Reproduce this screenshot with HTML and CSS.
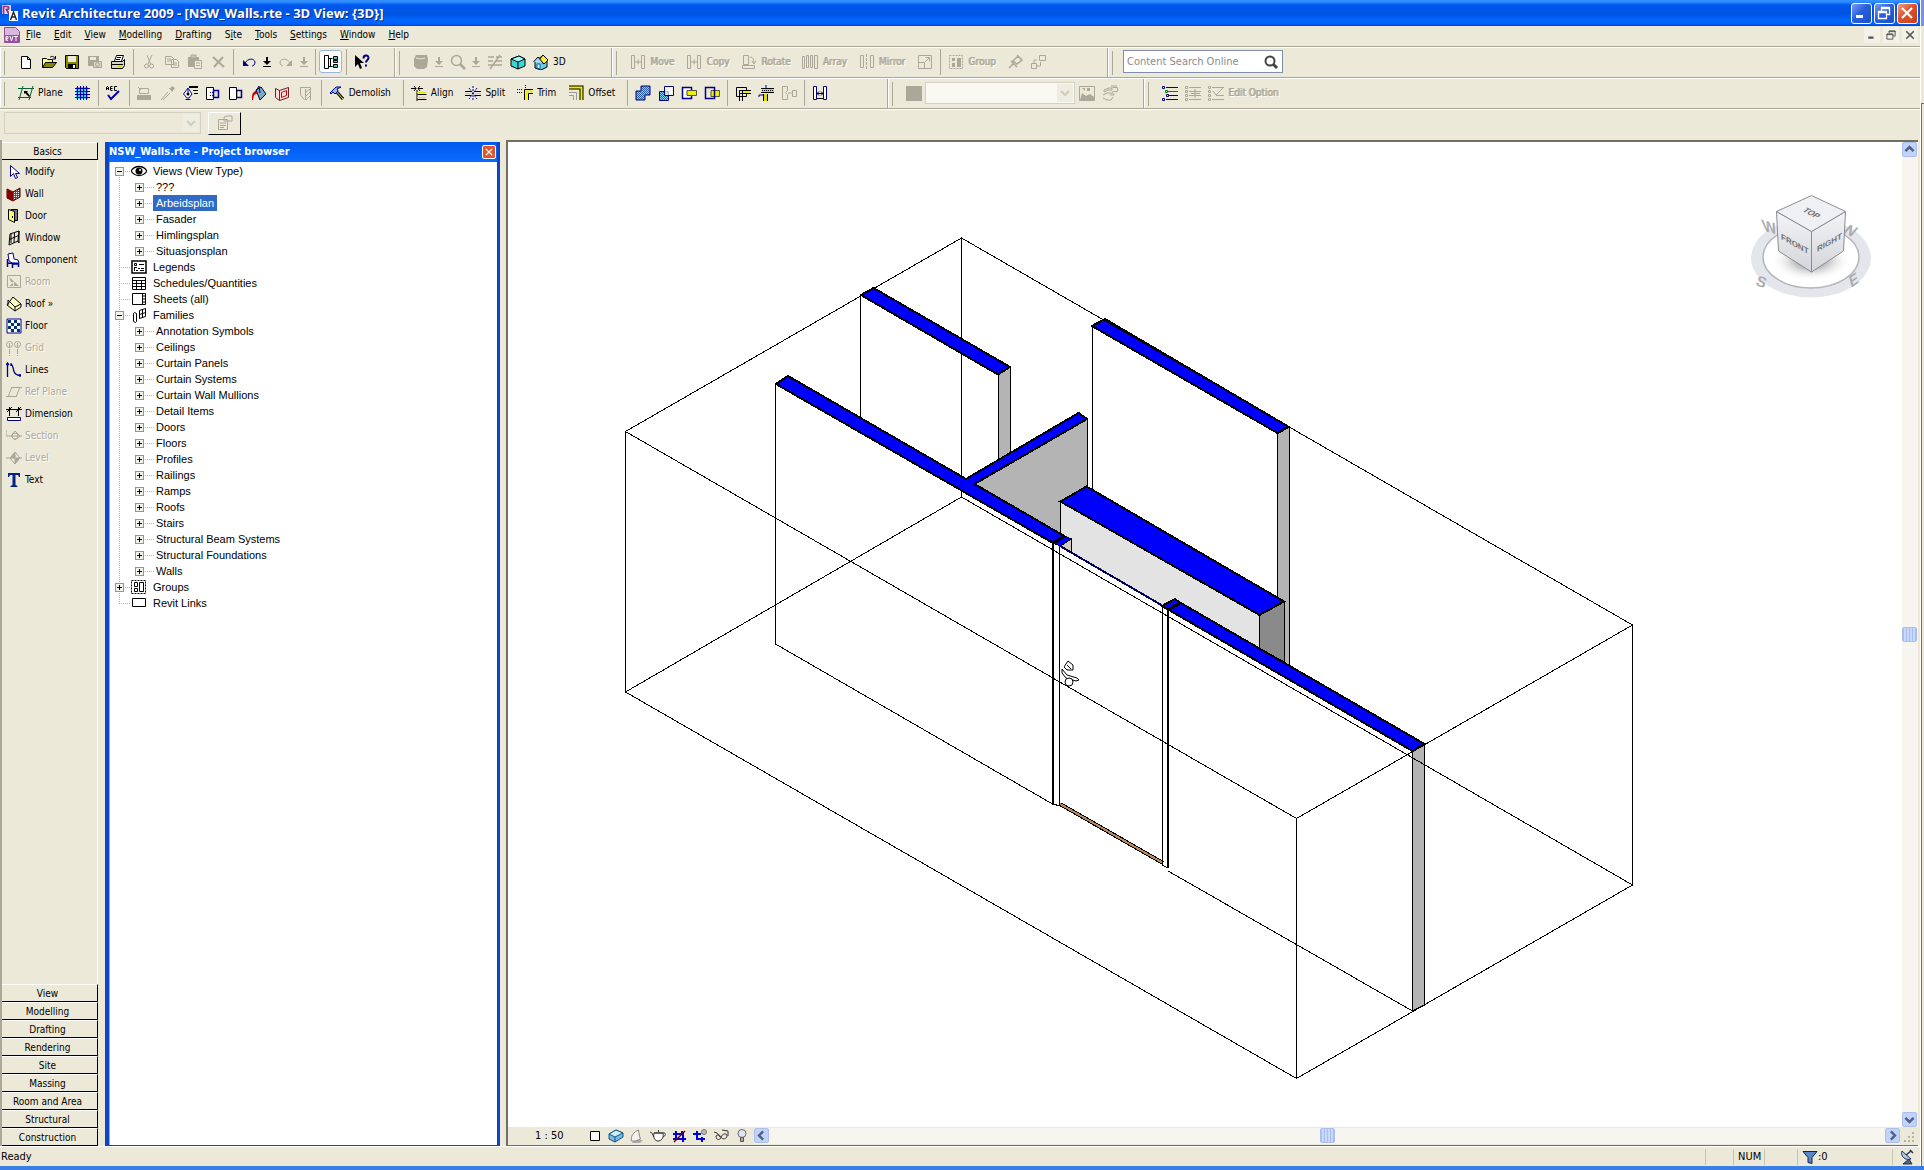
FILE: index.html
```html
<!DOCTYPE html>
<html lang="en">
<head>
  <meta charset="UTF-8">
  <meta name="viewport" content="width=device-width, initial-scale=1.0">
  <title>Revit Architecture 2009 - [NSW_Walls.rte - 3D View: {3D}]</title>
  <link rel="stylesheet" href="styles.css">
</head>
<body>
  <!-- icon sprite -->
  <svg class="sprite" aria-hidden="true">
    <defs>
      <pattern id="dots" width="2" height="2" patternUnits="userSpaceOnUse"><rect width="2" height="2" fill="#7fd4e8"/><path d="M0 0h1v1h-1zM1 1h1v1h-1z" fill="#2a5fa0"/></pattern>
      <pattern id="brick" width="2" height="2" patternUnits="userSpaceOnUse"><rect width="2" height="2" fill="#c22"/><path d="M0 0h1v1h-1z" fill="#fff"/></pattern>
      <linearGradient id="cubeFace" x1="0" y1="0" x2="0" y2="1"><stop offset="0" stop-color="#f3f4f7"/><stop offset="1" stop-color="#d3d5da"/></linearGradient>
      <radialGradient id="cubeShade"><stop offset="0.3" stop-color="#888" stop-opacity=".7"/><stop offset="1" stop-color="#fff" stop-opacity="0"/></radialGradient>
    </defs>
    <symbol id="new" viewBox="0 0 16 16"><path d="M3.500 2.500h6l3 3v9h-9zM9.500 2.500v3h3" fill="#fff" stroke="#000"/></symbol>
    <symbol id="open" viewBox="0 0 16 16"><path d="M1.500 13.500v-9h4l1 1h5v3" fill="#ff8" stroke="#000"/><path d="M1.500 13.500l3-5h11l-4 5z" fill="#880" stroke="#000"/><path d="M9 3.500c2-2 4-1 5 1M14.500 2v3h-3" fill="none" stroke="#000"/></symbol>
    <symbol id="save" viewBox="0 0 16 16"><path d="M1.500 1.500h13v13h-12l-1-1z" fill="#880" stroke="#000"/><path d="M4 2h8v6H4z" fill="#ece9d8"/><path d="M4 10h8v4H4z" fill="#000"/><path d="M9 11h2v3H9z" fill="#fff"/></symbol>
    <symbol id="saveall" viewBox="0 0 16 16"><path d="M1 2h11v10H1z" fill="#aca899"/><path d="M3 3h6v3H3z" fill="#ece9d8"/><path d="M6.500 7.500h8v6h-8z" fill="#d8d4c4" stroke="#aca899"/><circle cx="10.500" cy="10.500" r="2" fill="none" stroke="#aca899"/></symbol>
    <symbol id="print" viewBox="0 0 16 16"><path d="M4.500 7l2-5.500h7l-2 5.500" fill="#fff" stroke="#000"/><path d="M1.500 7.500h11l2-2v6l-2 3h-11z" fill="#d8d4c4" stroke="#000"/><path d="M2 10.500h11M7 3.500h4M6 5.500h4" stroke="#000"/><path d="M8 12h3v1H8z" fill="#cc0"/></symbol>
    <symbol id="cut" viewBox="0 0 16 16"><path d="M6 1l3.500 9M11 1L7 10" stroke="#aca899" fill="none"/><circle cx="5.500" cy="12" r="2" fill="none" stroke="#aca899"/><circle cx="10.500" cy="12" r="2" fill="none" stroke="#aca899"/></symbol>
    <symbol id="copy" viewBox="0 0 16 16"><g fill="#ece9d8" stroke="#aca899"><path d="M1.500 2.500h6l2 2v6h-8zM7.500 5.500h5l2 2v6h-7zM3 5h4M3 7h4M9 9h4M9 11h4"/></g></symbol>
    <symbol id="paste" viewBox="0 0 16 16"><path d="M1 3h11v10H1z" fill="#aca899"/><path d="M4 1h5v3H4z" fill="#c8c4b4" stroke="#aca899"/><path d="M7.500 6.500h7v8h-7zM9 9h4M9 11.500h4" fill="#ece9d8" stroke="#aca899"/></symbol>
    <symbol id="del" viewBox="0 0 16 16"><path d="M3 3l11 10M13 3L4 13" stroke="#aca899" stroke-width="2"/></symbol>
    <symbol id="undo" viewBox="0 0 16 16"><path d="M4 9c3-5 9-5 10-1 0 3-2 4-3 4" fill="none" stroke="#008"/><path d="M2 6v6h6z" fill="#008"/></symbol>
    <symbol id="redo" viewBox="0 0 16 16"><path d="M12 9c-3-5-9-5-10-1 0 3 2 4 3 4" fill="none" stroke="#aca899"/><path d="M14 6v6H8z" fill="#aca899"/></symbol>
    <symbol id="drop" viewBox="0 0 16 16"><path d="M7 3h2v4h3l-4 4-4-4h3zM4 12h8v1H4z" fill="currentColor"/></symbol>
    <symbol id="tree" viewBox="0 0 16 16"><path d="M1.500 1.500h4v13h-4zM5.500 4.500h4M5.500 12.500h4M7.500 4v9" fill="none" stroke="#000"/><path d="M10.500 2.500h4v3h-4zM10.500 10.500h4v3h-4zM10.500 6.500h4v2h-4z" fill="#4cc" stroke="#000"/></symbol>
    <symbol id="help" viewBox="0 0 16 16"><path d="M1 1v12l3-3 2 5 2-1-2-5h4z" fill="#000"/><path d="M9.500 4.500c0-4 5-4 5-.500 0 2-2.500 2-2.500 4.500M12 10.500v2" fill="none" stroke="#008" stroke-width="2"/></symbol>
    <symbol id="wheel" viewBox="0 0 16 16"><path d="M3 1h11l1 4-1 8-3 2H4l-3-3V5z" fill="#aca899"/><path d="M3 4c3 1 6 1 9 0" stroke="#ece9d8" fill="none"/></symbol>
    <symbol id="zoom" viewBox="0 0 16 16"><circle cx="6.500" cy="6.500" r="5" fill="none" stroke="#aca899" stroke-width="1.500"/><path d="M10 10l5 5" stroke="#aca899" stroke-width="2.500"/></symbol>
    <symbol id="thin" viewBox="0 0 16 16"><path d="M1 3h6M1 7h5M1 11h4M9 3h6M8 7h7M6 11h9M3 15L13 1" stroke="#aca899" stroke-width="1.500"/></symbol>
    <symbol id="cube" viewBox="0 0 16 16"><path d="M1 5l8-3 6 3v7l-7 3-7-3z" fill="#3cd6d6" stroke="#000"/><path d="M1 5l7 3 7-3L9 2z" fill="#9ff" stroke="#000"/><path d="M8 8v7" stroke="#000"/></symbol>
    <symbol id="house" viewBox="0 0 16 16"><path d="M2 8v6l6 2 6-3V7L9 2z" fill="#6cd" stroke="#000"/><path d="M6 6l4-5 5 5-4 4z" fill="#fe3" stroke="#000"/><path d="M0.500 8L5 3l5 6" fill="#adf" stroke="#000"/><path d="M4 10h3v5l-3-1z" fill="#fff" stroke="#06a"/></symbol>
    <symbol id="move" viewBox="0 0 16 16"><path d="M1.500 1.500h3v13h-3zM11.500 1.500h3v13h-3zM5 8h6M8 5.500v5" fill="none" stroke="#aca899"/></symbol>
    <symbol id="rotate" viewBox="0 0 16 16"><path d="M2.500 1.500h5v9h-5zM1.500 11.500h12v3h-12zM9 3c3 0 4 3 4 6M11 7l2 3 2-3" fill="none" stroke="#aca899"/></symbol>
    <symbol id="array" viewBox="0 0 16 16"><path d="M.500 2.500h2v12h-2zM4.500 1.500h2v12h-2zM8.500 1.500h2v12h-2zM12.500 1.500h3v13h-3z" fill="none" stroke="#aca899"/></symbol>
    <symbol id="mirror" viewBox="0 0 16 16"><path d="M1.500 1.500h3v12h-3zM11.500 1.500h3v12h-3z" fill="none" stroke="#aca899"/><path d="M7.500 0v16" stroke="#aca899" stroke-dasharray="3 1"/></symbol>
    <symbol id="resize" viewBox="0 0 16 16"><path d="M1.500 1.500h13v13h-13zM1.500 8.500h6v6M8 8l4-4M8.500 3.500h4v4" fill="none" stroke="#aca899"/></symbol>
    <symbol id="group" viewBox="0 0 16 16"><path d="M1.500 1.500h13v13h-13z" fill="none" stroke="#aca899" stroke-dasharray="2 1"/><path d="M4 4h3v3H4zM4 9h3v4H4zM9 4h4v9H9z" fill="#aca899"/></symbol>
    <symbol id="pin" viewBox="0 0 16 16"><path d="M2 14l5-5M4 7l6 6M6 7l5-5 4 4-5 4zM10 1l5 5" stroke="#aca899" stroke-width="1.500" fill="none"/></symbol>
    <symbol id="link" viewBox="0 0 16 16"><path d="M1.500 9.500h5v5h-5zM9.500 1.500h6v5h-6zM4 9V6h3M6.500 12h4V8" fill="none" stroke="#aca899"/></symbol>
    <symbol id="plane" viewBox="0 0 16 16"><path d="M0 3.500h16M0 12.500h13M5 1L1 15M15 1l-4 14" stroke="#063" fill="none"/><path d="M6 6h4l-1 1 3 4-1 1-4-4-1 1z" fill="#000"/></symbol>
    <symbol id="grid" viewBox="0 0 16 16"><path d="M2 2h12v12H2z" fill="#4cf"/><path d="M1 3.500h15M1 6.500h15M1 9.500h15M1 12.500h15M3.500 1v14M6.500 1v14M9.500 1v14M12.500 1v14" stroke="#00a"/></symbol>
    <symbol id="spell" viewBox="0 0 16 16"><path d="M1.500 5V2M3.500 5V2M2 1.500h1M2 3.500h1M5.500 1.500v4M6 1.500h1.500M6 3.500h1.500M6 5.500h1.500M12 1.500h-2.500v4H12" stroke="#000" fill="none"/><path d="M3 10l3 4 8-8" fill="none" stroke="#00a" stroke-width="2"/></symbol>
    <symbol id="stamp" viewBox="0 0 16 16"><path d="M1 10h14v5H1z" fill="#aca899"/><path d="M3.500 3.500h9v5h-9zM2 2l3 3" fill="none" stroke="#aca899"/></symbol>
    <symbol id="dropper" viewBox="0 0 16 16"><path d="M2 15l7-8M4 15l7-7M10 3l4 3" stroke="#aca899" fill="none"/><path d="M11 4l2-3 3 2-3 4z" fill="#aca899"/></symbol>
    <symbol id="pen" viewBox="0 0 16 16"><path d="M1.500 9L6 3l4 6-3 4H5zM6 4v5M3.500 14.500h5" fill="#fff" stroke="#008"/><path d="M7 1h9v2H7zM11 5h5v1h-5zM12 8h4v1h-4z" fill="#000"/><circle cx="6" cy="9" r="1.500"/></symbol>
    <symbol id="cuta" viewBox="0 0 16 16"><path d="M1.500 2.500h7v12h-7z" fill="#fff" stroke="#000"/><path d="M8.500 5.500h5v7h-5z" fill="#ddd" stroke="#008" stroke-width="1.500"/><path d="M5 7.500h3M5 10.500h3" stroke="#008" stroke-dasharray="1 1"/></symbol>
    <symbol id="cutb" viewBox="0 0 16 16"><path d="M8.500 5.500h5v7h-5z" fill="none" stroke="#008" stroke-width="1.500"/><path d="M1.500 2.500h7v12h-7z" fill="#fff" stroke="#000"/></symbol>
    <symbol id="paint" viewBox="0 0 16 16"><path d="M5 5l5-3 5 7-6 6z" fill="#7ac" stroke="#000"/><path d="M4 8L8 1l1 7" fill="none" stroke="#008"/><path d="M1 15c0-5 0-8 4-9l2 2-4 2-1 5z" fill="#c00"/></symbol>
    <symbol id="face" viewBox="0 0 16 16"><path d="M1.500 3.500l4 2 9-3v10l-9 3-4-3z" fill="#fdd" stroke="#622"/><path d="M5.500 5v10M7.500 7.500l5-2v5l-5 2z" fill="none" stroke="#c00"/></symbol>
    <symbol id="hatch" viewBox="0 0 16 16"><path d="M3.500 2.500h10v13M3.500 2v8l4 5M8.500 4v11M9 7l4-3M9 11l4-4M9 15l4-4" fill="none" stroke="#aca899"/></symbol>
    <symbol id="hammer" viewBox="0 0 16 16"><path d="M7 6l7 8" stroke="#000" stroke-width="3"/><path d="M7 6l7 8" stroke="#ee6"/><path d="M1 8l6-6h5L8 4l1 2-3 3-2-2-2 2z" fill="#9bd" stroke="#008"/></symbol>
    <symbol id="align" viewBox="0 0 16 16"><path d="M6 5v11M6.500 9.500h9M6.500 14.500h9" fill="none" stroke="#000"/><path d="M6 7h9v1H6zM6 12h9v1H6z" fill="#dd0"/><path d="M0 3.500h5M3 1l2 2.500L3 6M12 3.500H7M9 1L7 3.500 9 6" stroke="#000" fill="none"/></symbol>
    <symbol id="split" viewBox="0 0 16 16"><path d="M0 6.500h6M10 6.500h6M0 10.500h6M10 10.500h6" stroke="#000"/><path d="M0 8h6v1H0zM10 8h6v1h-6z" fill="#dd0"/><path d="M8 1v15M4 3l8 11M12 3L4 14" stroke="#008" stroke-dasharray="2 1"/></symbol>
    <symbol id="trim" viewBox="0 0 16 16"><path d="M0 4.500h6M0 7.500h6M8.500 0v4" stroke="#008" stroke-dasharray="1 1"/><path d="M7.500 15V4.500H16M11.500 15V8.500H16" fill="none" stroke="#000"/><path d="M9.500 15V6.500H16" fill="none" stroke="#ee0" stroke-width="2"/></symbol>
    <symbol id="offset" viewBox="0 0 16 16"><path d="M1 2.500h12.500V15" fill="none" stroke="#000" stroke-width="4"/><path d="M1 2.500h12.500V15" fill="none" stroke="#ee0" stroke-width="2"/><path d="M1 7.500h7.500V15M1 10.500h4.500V15" fill="none" stroke="#999"/></symbol>
    <symbol id="join" viewBox="0 0 16 16"><path d="M6 1h9v9h-5v5H1V6h5z" fill="url(#dots)" stroke="#008"/></symbol>
    <symbol id="unjoin" viewBox="0 0 16 16"><path d="M1.500 6.500h9v9h-9z" fill="url(#dots)" stroke="#008"/><path d="M6.500 1.500h9v9h-9z" fill="#fff" fill-opacity=".7" stroke="#008"/></symbol>
    <symbol id="cutgeo" viewBox="0 0 16 16"><path d="M1.500 2.500h9v11h-9z" fill="#fff" stroke="#008" stroke-width="1.500"/><path d="M6 5.500h9.500v5H6z" fill="#ee0" stroke="#553"/></symbol>
    <symbol id="uncut" viewBox="0 0 16 16"><path d="M7 5.500h8.500v6H7z" fill="#ee0" stroke="#553"/><path d="M1.500 2.500h9v11h-9z" fill="none" stroke="#008" stroke-width="1.500"/></symbol>
    <symbol id="wjoin" viewBox="0 0 16 16"><path d="M1.500 2.500h10v9h-10zM4.500 16V5.500H16M4 8.500h12M7.500 16V6" fill="none" stroke="#000"/><path d="M8 6h7v2H8z" fill="#ee0"/></symbol>
    <symbol id="beam" viewBox="0 0 16 16"><path d="M3 3.500h13M3 7.500h13M5.500 9v7M9.500 9v7" stroke="#000"/><path d="M4 4h12v3H4zM6 9h3v7H6z" fill="#dd0"/><path d="M8 0v3M1 12v-2h4" fill="none" stroke="#008"/><path d="M4 5.500h12" stroke="#000" stroke-dasharray="1 1"/></symbol>
    <symbol id="wallopen" viewBox="0 0 16 16"><path d="M1.500 1.500h5v4l-2 2 2 2v5h-5zM7 8h4M11.500 5.500h4v6h-4z" fill="none" stroke="#aca899"/></symbol>
    <symbol id="measure" viewBox="0 0 16 16"><path d="M1.500 1.500h3v13h-3zM11.500 1.500h3v13h-3z" fill="#fff" stroke="#008"/><path d="M5 8.500h6M7 6.500l-2 2 2 2M9 6.500l2 2-2 2M5 13.500h6" fill="none" stroke="#000"/></symbol>
    <symbol id="solid" viewBox="0 0 16 16"><path d="M0 1h16v15H0z" fill="#aca899"/></symbol>
    <symbol id="pic" viewBox="0 0 16 16"><path d="M.500 1.500h15v14H.500z" fill="#ece9d8" stroke="#aca899"/><path d="M1 15l2-7 4 3 4-2 4 3v3zM3 3h3v3zM8 3h3v3H8z" fill="#aca899"/></symbol>
    <symbol id="hands" viewBox="0 0 16 16"><path d="M2 5l5-2h3v2h-4l-4 2zM10.500 2.500h5v4h-5M1 10l4-2h6l1 2H8M1 13l4 2h4l2-3M9 1h6" fill="none" stroke="#aca899"/></symbol>
    <symbol id="opts" viewBox="0 0 16 16"><path d="M4 2.500h12M10 10.500h6M4 14.500h12M7 10.500h4" stroke="#008"/><path d="M6 6.500h10" stroke="#080"/><path d="M.500 1.500h2v2h-2zM.500 13.500h2v2h-2zM4.500 9.500h2v2h-2z" fill="none" stroke="#008"/><path d="M3.500 5.500h2v2h-2z" fill="none" stroke="#080"/></symbol>
    <symbol id="optadd" viewBox="0 0 16 16"><path d="M4 2.500h12M4 6.500h12M4 10.500h12M4 14.500h12M6 8.500h9M10 4v9" stroke="#aca899"/><path d="M.500 1.500h2v2h-2zM.500 5.500h2v2h-2zM.500 9.500h2v2h-2zM.500 13.500h2v2h-2z" fill="none" stroke="#aca899"/></symbol>
    <symbol id="optedit" viewBox="0 0 16 16"><path d="M4 2.500h12M8 10.500h8M4 14.500h12M5 6l3 4 7-7" fill="none" stroke="#aca899"/><path d="M.500 1.500h2v2h-2zM.500 5.500h2v2h-2zM.500 9.500h2v2h-2zM.500 13.500h2v2h-2z" fill="none" stroke="#aca899"/></symbol>
    <symbol id="props" viewBox="0 0 16 16"><path d="M1.500 4.500h9v10h-9zM3 8h6M3 10.500h6M3 12.500h4M7 6V2l3-1h5v5h-4z" fill="#ece9d8" stroke="#aca899"/></symbol>
    <symbol id="find" viewBox="0 0 16 16"><circle cx="7" cy="7" r="4.500" fill="none" stroke="#444" stroke-width="2"/><path d="M10 10l4 4" stroke="#444" stroke-width="3"/></symbol>
    <!-- design bar -->
    <symbol id="modify" viewBox="0 0 16 16"><path d="M4.500 1.500v11l3-3 2 5 2-1-2-4h4z" fill="#fff" stroke="#008"/></symbol>
    <symbol id="wall" viewBox="0 0 16 16"><path d="M1 3l6 3 7-4v9l-7 4-6-3z" fill="url(#brick)" stroke="#500"/><path d="M1 3l6 3v9l-6-3z" fill="#800"/></symbol>
    <symbol id="door" viewBox="0 0 16 16"><path d="M5 1.500h6.500v11H9z" fill="#777" stroke="#000"/><path d="M2.500 1.500l6 2v11l-6-3z" fill="#ff7" stroke="#000"/><path d="M6 8h1v2H6z"/></symbol>
    <symbol id="window" viewBox="0 0 16 16"><path d="M4 4l9-3-1 10-9 4zM8.500 2.500L8 13M3.500 9.500l9-4M12 11l1 2V1M5 3v10" fill="none" stroke="#000"/></symbol>
    <symbol id="component" viewBox="0 0 16 16"><path d="M2 2l5-1 1 6 4 1 1 3H6L3 9z" fill="#fff" stroke="#008"/><path d="M1.500 7v8M6.500 12v4M12.500 11v4M2 11l10 1" stroke="#008" stroke-width="1.500"/></symbol>
    <symbol id="room" viewBox="0 0 16 16"><path d="M1.500 1.500h13v12h-13z" fill="#ece9d8" stroke="#aca899"/><path d="M3 3l10 9H8V8H5zM3 12l4-3v3z" fill="#aca899"/></symbol>
    <symbol id="roof" viewBox="0 0 16 16"><path d="M1 9l6-8 8 7v3l-6 4z" fill="#ffb" stroke="#000"/><path d="M2 4l7 7 6-3M9 11v4M2 4v5" fill="none" stroke="#000"/></symbol>
    <symbol id="floor" viewBox="0 0 16 16"><path d="M1 1h14v14H1z" fill="#fff" stroke="#008"/><path d="M2 2h3v3h3V2h3v3h3v3h-3v3h3v3h-3v-3H8v3H5v-3H2V8h3V5H2zM5 8h3v3H5zM8 5h3v3H8z" fill="#037" fill-rule="evenodd"/></symbol>
    <symbol id="cols" viewBox="0 0 16 16"><circle cx="3.500" cy="4.500" r="3" fill="none" stroke="#aca899"/><circle cx="11.500" cy="4.500" r="3" fill="none" stroke="#aca899"/><path d="M3.500 3v13M11.500 3v13" stroke="#aca899" stroke-dasharray="5 1"/></symbol>
    <symbol id="lines" viewBox="0 0 16 16"><path d="M1.500 1v14M0 3l1.500-2L3 3M5 2.500c2 0 2 4 3 7s3 4 7 4M5 1v3M14 12v3" fill="none" stroke="#008" stroke-width="1.300"/></symbol>
    <symbol id="refplane" viewBox="0 0 16 16"><path d="M5 3.500h11M0 12.500h11M6 3L2 13M14 3l-4 10" stroke="#aca899"/></symbol>
    <symbol id="dim" viewBox="0 0 16 16"><path d="M0 3.500h16M3.500 1v9M12.500 1v9M1 6l5-5M10 6l5-5" stroke="#000"/><path d="M1.500 11.500h13v3h-13z" fill="#fff" stroke="#008"/></symbol>
    <symbol id="section" viewBox="0 0 16 16"><path d="M0 2v6h16M5 8l4-5 5 5-5 4z" fill="none" stroke="#aca899"/><circle cx="9" cy="8" r="3" fill="none" stroke="#aca899"/></symbol>
    <symbol id="level" viewBox="0 0 16 16"><path d="M0 8h16M4 8l5-6v12M9 2l5 6-5 6-5-6" fill="none" stroke="#aca899"/><path d="M4 8h5V2zM9 8h5l-5 6z" fill="#aca899"/></symbol>
    <symbol id="text" viewBox="0 0 16 16"><path d="M2 1h12v4h-1l-1-2H9.500v10l2 1v1h-7v-1l2-1V3H4L3 5H2z" fill="#00228a"/></symbol>
    <!-- browser -->
    <symbol id="eye" viewBox="0 0 16 16"><path d="M0 8c4-6 12-6 16 0-4 6-12 6-16 0z" fill="#fff" stroke="#000" stroke-width="1.300"/><circle cx="8" cy="8" r="3.500"/><circle cx="9" cy="7" r="1" fill="#fff"/></symbol>
    <symbol id="legend" viewBox="0 0 16 16"><path d="M1 2h14v12H1z" fill="#fff" stroke="#000" stroke-width="1.500"/><path d="M3.500 4.500h2v2h-2zM8 5.500h5M3.500 8v4M4 8.500h2M7 9.500h2M10 9.500h3M5 11.500h2M9 11.500h4" fill="none" stroke="#000"/></symbol>
    <symbol id="sched" viewBox="0 0 16 16"><path d="M1.500 2.500h13v12h-13zM1 5.500h14M1 8.500h14M1 11.500h14M5.500 5v9M10.500 5v9" fill="#fff" stroke="#000"/></symbol>
    <symbol id="sheet" viewBox="0 0 16 16"><path d="M1.500 2.500h13v11h-13zM11.500 2v12M12 5h2M12 8h2M12 11h2" fill="#fff" stroke="#000"/></symbol>
    <symbol id="family" viewBox="0 0 16 16"><path d="M2.500 6.500l1-1 2 1v8l-1 1-2-1zM8.500 3.500l6-2v8l-6 2zM11.500 2.500v8M8.500 7.500l6-2" fill="none" stroke="#000"/></symbol>
    <symbol id="groups" viewBox="0 0 16 16"><path d="M.500 1.500h14v13H.500z" fill="none" stroke="#000" stroke-dasharray="2 1"/><path d="M3.500 3.500h3v4h-3zM3.500 9.500h3v3h-3zM8.500 3.500h4v9h-4z" fill="none" stroke="#000"/></symbol>
    <symbol id="rlink" viewBox="0 0 16 16"><path d="M1.500 3.500h13v8h-13z" fill="#fff" stroke="#000"/></symbol>
    <!-- view bar -->
    <symbol id="detail" viewBox="0 0 16 16"><path d="M3.500 3.500h9v9h-9z" fill="#fff" stroke="#000"/></symbol>
    <symbol id="shade" viewBox="0 0 16 16"><path d="M1 6l7-4 7 3v4l-8 5-6-3z" fill="#7be" stroke="#157"/><path d="M1 6l6 3 8-4-7-3z" fill="#cef" stroke="#157"/><path d="M7 9v5" stroke="#157"/></symbol>
    <symbol id="shadow" viewBox="0 0 16 16"><path d="M5 12h9l-3 3H3z" fill="#aaa"/><path d="M2.500 13c-1-5 2-9 7-11l1 6 1 3-5 2z" fill="#f4f2ea" stroke="#888"/></symbol>
    <symbol id="teapot" viewBox="0 0 16 16"><path d="M4 5c-1 5 1 8 4 8s6-3 5-8zM4 9L1.500 4.500 0 4M13 5c3-1 3 3 0 4M4 5h9M8.500 2v2" fill="#fff" stroke="#333"/></symbol>
    <symbol id="crop" viewBox="0 0 16 16"><path d="M2 6h10v8M5 3v8h10M2 11h4M11 6V3" fill="none" stroke="#00d" stroke-width="2"/><path d="M3 14L14 3" stroke="#600" stroke-width="1.500"/></symbol>
    <symbol id="cropvis" viewBox="0 0 16 16"><path d="M1 6h8M5 3v8h8M10 9v5" fill="none" stroke="#00d" stroke-width="2"/><circle cx="12" cy="4" r="2.500" fill="#bbb" stroke="#777"/></symbol>
    <symbol id="glasses" viewBox="0 0 16 16"><path d="M1 4l3 1 3 4M9 2l6 1v5M3 8c0 5 5 4 5 1M8 9c1 3 6 2 6-1s-4-3-6 1M3 8c2-2 4-1 5 1" fill="none" stroke="#333"/></symbol>
    <symbol id="bulb" viewBox="0 0 16 16"><circle cx="8" cy="5.500" r="4" fill="#dfe6f2" stroke="#667"/><path d="M6.500 9.500h3v4h-3z" fill="#aaa" stroke="#555"/></symbol>
    <symbol id="funnel" viewBox="0 0 16 16"><path d="M1 2.500h14L10 8.500v6l-4-1v-5z" fill="#5a86c8" stroke="#124"/></symbol>
    <symbol id="dish" viewBox="0 0 16 16"><path d="M4 15h9l-3-5z" fill="#567" stroke="#235"/><path d="M3 2c-2 5 3 10 9 8z" fill="#adc6e6" stroke="#235"/><path d="M7 6l5-4M11 1l3 3" stroke="#235" stroke-width="1.500"/></symbol>
    <symbol id="min" viewBox="0 0 16 16"><path d="M3 10h7v3H3z" fill="currentColor"/></symbol>
    <symbol id="restore" viewBox="0 0 16 16"><path d="M5.500 6V2.500h8v7H11M5 3.500h9M2.500 6.500h8v7h-8zM2 7.500h9" fill="none" stroke="currentColor" stroke-width="1.300"/></symbol>
    <symbol id="close" viewBox="0 0 16 16"><path d="M3 3l10 10M13 3L3 13" stroke="currentColor" stroke-width="2.200"/></symbol>
    <symbol id="chev" viewBox="0 0 16 16"><path d="M3 10l5-5 5 5" fill="none" stroke="#4d6185" stroke-width="3"/></symbol>
  </svg>

  <div class="screen">
  <div class="app">
    <header class="titlebar">
      <svg class="logo" viewBox="0 0 16 16"><path d="M0 0h9v9H0z" fill="#e9d9ee"/><path d="M1.500 9V1.500h3c3 0 3 3 0 3L7 9" fill="none" stroke="#93307f" stroke-width="1.700"/><path d="M7 6h9v10H7z" fill="#fff"/><path d="M8.500 15l3-8 3 8M9.500 12h4" fill="none" stroke="#222" stroke-width="1.400"/></svg>
      <h1>Revit Architecture 2009 - [NSW_Walls.rte - 3D View: {3D}]</h1>
      <div class="winbtns">
        <button aria-label="Minimize"><svg><use href="#min"/></svg></button>
        <button aria-label="Restore"><svg><use href="#restore"/></svg></button>
        <button class="red" aria-label="Close"><svg><use href="#close"/></svg></button>
      </div>
    </header>

    <nav class="menubar">
      <svg class="doc" viewBox="0 0 16 16"><path d="M.500.500h11l4 4v11H.500z" fill="#d9b8de" stroke="#8f4f9a"/><path d="M0 8h16v7H0z" fill="#9a4f9f"/><path d="M2 14V9.500h2v2H2l2 2.500M6 9l1.500 5L9 9M10 9.500h4M12 9.500V14" fill="none" stroke="#fff"/></svg>
      <button><u>F</u>ile</button>
      <button><u>E</u>dit</button>
      <button><u>V</u>iew</button>
      <button><u>M</u>odelling</button>
      <button><u>D</u>rafting</button>
      <button>S<u>i</u>te</button>
      <button><u>T</u>ools</button>
      <button><u>S</u>ettings</button>
      <button><u>W</u>indow</button>
      <button><u>H</u>elp</button>
      <div class="docbtns">
        <button aria-label="Minimize view"><svg><use href="#min"/></svg></button>
        <button aria-label="Restore view"><svg><use href="#restore"/></svg></button>
        <button aria-label="Close view"><svg><use href="#close"/></svg></button>
      </div>
    </nav>

    <div class="toolrow">
      <div class="toolbar std">
        <button class="tool" aria-label="New"><svg><use href="#new"/></svg></button>
        <button class="tool" aria-label="Open"><svg><use href="#open"/></svg></button>
        <button class="tool" aria-label="Save"><svg><use href="#save"/></svg></button>
        <button class="tool" aria-label="Save to central" disabled><svg><use href="#saveall"/></svg></button>
        <button class="tool" aria-label="Print"><svg><use href="#print"/></svg></button>
        <span class="sep"></span>
        <button class="tool" aria-label="Cut" disabled><svg><use href="#cut"/></svg></button>
        <button class="tool" aria-label="Copy" disabled><svg><use href="#copy"/></svg></button>
        <button class="tool" aria-label="Paste" disabled><svg><use href="#paste"/></svg></button>
        <button class="tool" aria-label="Delete" disabled><svg><use href="#del"/></svg></button>
        <span class="sep"></span>
        <button class="tool" aria-label="Undo"><svg><use href="#undo"/></svg></button>
        <button class="tool drop" aria-label="Undo list"><svg><use href="#drop"/></svg></button>
        <button class="tool" aria-label="Redo" disabled><svg><use href="#redo"/></svg></button>
        <button class="tool drop" aria-label="Redo list" disabled><svg><use href="#drop"/></svg></button>
        <span class="sep"></span>
        <button class="tool pressed" aria-label="Project browser"><svg><use href="#tree"/></svg></button>
        <span class="sep"></span>
        <button class="tool" aria-label="Help"><svg><use href="#help"/></svg></button>
      </div>
      <div class="toolbar view">
        <button class="tool" aria-label="Steering wheel" disabled><svg><use href="#wheel"/></svg></button>
        <button class="tool drop" aria-label="Wheel list" disabled><svg><use href="#drop"/></svg></button>
        <button class="tool" aria-label="Zoom" disabled><svg><use href="#zoom"/></svg></button>
        <button class="tool drop" aria-label="Zoom list" disabled><svg><use href="#drop"/></svg></button>
        <button class="tool" aria-label="Thin lines" disabled><svg><use href="#thin"/></svg></button>
        <button class="tool" aria-label="Default view"><svg><use href="#cube"/></svg></button>
        <button class="tool label"><svg><use href="#house"/></svg>3D</button>
      </div>
      <div class="toolbar edit">
        <button class="tool label" disabled><svg><use href="#move"/></svg>Move</button>
        <button class="tool label" disabled><svg><use href="#move"/></svg>Copy</button>
        <button class="tool label" disabled><svg><use href="#rotate"/></svg>Rotate</button>
        <button class="tool label" disabled><svg><use href="#array"/></svg>Array</button>
        <button class="tool label" disabled><svg><use href="#mirror"/></svg>Mirror</button>
        <button class="tool" aria-label="Resize" disabled><svg><use href="#resize"/></svg></button>
        <span class="sep"></span>
        <button class="tool label" disabled><svg><use href="#group"/></svg>Group</button>
        <button class="tool" aria-label="Pin" disabled><svg><use href="#pin"/></svg></button>
        <button class="tool" aria-label="Create similar" disabled><svg><use href="#link"/></svg></button>
      </div>
      <div class="toolbar last">
        <div class="search">
          <input type="text" placeholder="Content Search Online" aria-label="Content Search Online">
          <button aria-label="Search"><svg><use href="#find"/></svg></button>
        </div>
      </div>
    </div>

    <div class="toolrow">
      <div class="toolbar tools">
        <button class="tool label"><svg><use href="#plane"/></svg>Plane</button>
        <button class="tool" aria-label="Grid"><svg><use href="#grid"/></svg></button>
        <span class="sep"></span>
        <button class="tool" aria-label="Spelling"><svg><use href="#spell"/></svg></button>
        <span class="sep"></span>
        <button class="tool" aria-label="Match" disabled><svg><use href="#stamp"/></svg></button>
        <button class="tool" aria-label="Pick" disabled><svg><use href="#dropper"/></svg></button>
        <button class="tool" aria-label="Linework"><svg><use href="#pen"/></svg></button>
        <button class="tool" aria-label="Show hidden"><svg><use href="#cuta"/></svg></button>
        <button class="tool" aria-label="Remove hidden"><svg><use href="#cutb"/></svg></button>
        <button class="tool" aria-label="Paint"><svg><use href="#paint"/></svg></button>
        <button class="tool" aria-label="Split face"><svg><use href="#face"/></svg></button>
        <button class="tool" aria-label="Hatch" disabled><svg><use href="#hatch"/></svg></button>
        <span class="sep"></span>
        <button class="tool label"><svg><use href="#hammer"/></svg>Demolish</button>
        <span class="sep"></span>
        <button class="tool label"><svg><use href="#align"/></svg>Align</button>
        <button class="tool label"><svg><use href="#split"/></svg>Split</button>
        <button class="tool label"><svg><use href="#trim"/></svg>Trim</button>
        <button class="tool label"><svg><use href="#offset"/></svg>Offset</button>
        <span class="sep"></span>
        <button class="tool" aria-label="Join"><svg><use href="#join"/></svg></button>
        <button class="tool" aria-label="Unjoin"><svg><use href="#unjoin"/></svg></button>
        <button class="tool" aria-label="Cut geometry"><svg><use href="#cutgeo"/></svg></button>
        <button class="tool" aria-label="Uncut geometry"><svg><use href="#uncut"/></svg></button>
        <span class="sep"></span>
        <button class="tool" aria-label="Wall joins"><svg><use href="#wjoin"/></svg></button>
        <button class="tool" aria-label="Beam joins"><svg><use href="#beam"/></svg></button>
        <button class="tool" aria-label="Wall opening" disabled><svg><use href="#wallopen"/></svg></button>
        <span class="sep"></span>
        <button class="tool" aria-label="Measure"><svg><use href="#measure"/></svg></button>
      </div>
      <div class="toolbar worksets">
        <button class="tool" aria-label="Worksets" disabled><svg><use href="#solid"/></svg></button>
        <select class="white" aria-label="Active workset" disabled><option></option></select>
        <button class="tool" aria-label="Gray inactive" disabled><svg><use href="#pic"/></svg></button>
        <button class="tool" aria-label="Editing requests" disabled><svg><use href="#hands"/></svg></button>
      </div>
      <div class="toolbar last">
        <button class="tool" aria-label="Design options"><svg><use href="#opts"/></svg></button>
        <button class="tool" aria-label="Add to option" disabled><svg><use href="#optadd"/></svg></button>
        <button class="tool label" disabled><svg><use href="#optedit"/></svg>Edit Option</button>
      </div>
    </div>

    <div class="options">
      <select aria-label="Type selector" disabled><option></option></select>
      <button aria-label="Properties" disabled><svg><use href="#props"/></svg></button>
    </div>

    <main class="work">
      <aside class="design">
        <button class="tab">Basics</button>
        <div class="cmds">
          <button><svg><use href="#modify"/></svg>Modify</button>
          <button><svg><use href="#wall"/></svg>Wall</button>
          <button><svg><use href="#door"/></svg>Door</button>
          <button><svg><use href="#window"/></svg>Window</button>
          <button><svg><use href="#component"/></svg>Component</button>
          <button disabled><svg><use href="#room"/></svg>Room</button>
          <button><svg><use href="#roof"/></svg>Roof »</button>
          <button><svg><use href="#floor"/></svg>Floor</button>
          <button disabled><svg><use href="#cols"/></svg>Grid</button>
          <button><svg><use href="#lines"/></svg>Lines</button>
          <button disabled><svg><use href="#refplane"/></svg>Ref Plane</button>
          <button><svg><use href="#dim"/></svg>Dimension</button>
          <button disabled><svg><use href="#section"/></svg>Section</button>
          <button disabled><svg><use href="#level"/></svg>Level</button>
          <button><svg><use href="#text"/></svg>Text</button>
        </div>
        <button class="tab">View</button>
        <button class="tab">Modelling</button>
        <button class="tab">Drafting</button>
        <button class="tab">Rendering</button>
        <button class="tab">Site</button>
        <button class="tab">Massing</button>
        <button class="tab">Room and Area</button>
        <button class="tab">Structural</button>
        <button class="tab">Construction</button>
      </aside>

      <section class="browser">
        <header>
          <h2>NSW_Walls.rte - Project browser</h2>
          <button aria-label="Close browser"><svg><use href="#close"/></svg></button>
        </header>
        <ul class="nodes">
          <li><div class="row"><i class="box open"></i><svg><use href="#eye"/></svg><span>Views (View Type)</span></div>
            <ul>
              <li><i class="box"></i><span>???</span></li>
              <li><i class="box"></i><span class="sel">Arbeidsplan</span></li>
              <li><i class="box"></i><span>Fasader</span></li>
              <li><i class="box"></i><span>Himlingsplan</span></li>
              <li><i class="box"></i><span>Situasjonsplan</span></li>
            </ul>
          </li>
          <li><div class="row"><i class="leaf"></i><svg><use href="#legend"/></svg><span>Legends</span></div></li>
          <li><div class="row"><i class="leaf"></i><svg><use href="#sched"/></svg><span>Schedules/Quantities</span></div></li>
          <li><div class="row"><i class="leaf"></i><svg><use href="#sheet"/></svg><span>Sheets (all)</span></div></li>
          <li><div class="row"><i class="box open"></i><svg><use href="#family"/></svg><span>Families</span></div>
            <ul>
              <li><i class="box"></i><span>Annotation Symbols</span></li>
              <li><i class="box"></i><span>Ceilings</span></li>
              <li><i class="box"></i><span>Curtain Panels</span></li>
              <li><i class="box"></i><span>Curtain Systems</span></li>
              <li><i class="box"></i><span>Curtain Wall Mullions</span></li>
              <li><i class="box"></i><span>Detail Items</span></li>
              <li><i class="box"></i><span>Doors</span></li>
              <li><i class="box"></i><span>Floors</span></li>
              <li><i class="box"></i><span>Profiles</span></li>
              <li><i class="box"></i><span>Railings</span></li>
              <li><i class="box"></i><span>Ramps</span></li>
              <li><i class="box"></i><span>Roofs</span></li>
              <li><i class="box"></i><span>Stairs</span></li>
              <li><i class="box"></i><span>Structural Beam Systems</span></li>
              <li><i class="box"></i><span>Structural Foundations</span></li>
              <li><i class="box"></i><span>Walls</span></li>
            </ul>
          </li>
          <li><div class="row"><i class="box"></i><svg><use href="#groups"/></svg><span>Groups</span></div></li>
          <li><div class="row"><i class="leaf"></i><svg><use href="#rlink"/></svg><span>Revit Links</span></div></li>
        </ul>
      </section>

      <section class="viewport">
        <div class="scene">
          <div class="canvas">
            <svg class="model" viewBox="508 142 1394 985" role="img" aria-label="3D view">
              <g stroke="#000" stroke-width="1" fill="none" shape-rendering="crispEdges">
                <!-- back walls -->
                <path d="M860.500 295V420M1092.500 326V492"/>
                <path d="M998.500 374l12-7v86l-12 8z" fill="#b4b4b4"/>
                <path d="M1277.500 433l12-6V668l-12-6z" fill="#b4b4b4"/>
                <path d="M861 295l12.500-7L1010 367l-12 7.500z" fill="#00f" stroke-width="2"/>
                <path d="M1092 326l13-7 184 108-11.500 6z" fill="#00f" stroke-width="2"/>
                <!-- partition -->
                <path d="M974 484l113.500-65v68l-27 15v34z" fill="#b4b4b4"/>
                <!-- wardrobe -->
                <path d="M1060.500 501.500L1259.500 615v34l-79-46-5-4-12 7-103-60z" fill="#e3e3e3"/>
                <path d="M1259.500 615l25-13.500V662l-25-13z" fill="#8a8a8a"/>
                <path d="M1060.500 501.500l26-15 197.500 115-24.500 13.500z" fill="#00f" stroke-width="2"/>
                <path d="M1071.500 539v13l-11-6z" fill="#d2cabb"/>
                <!-- front wall -->
                <path d="M776 384l12-8L966 479l112.500-66 8.500 6-112.500 65 90.500 52.500-12 6.500z" fill="#00f" stroke-width="2"/>
                <path d="M1065 536l6 3-11 7-7-3z" fill="#00f" stroke-width="1"/>
                <path d="M1053 543l12-7" stroke-width="3"/>
                <path d="M1060 546l103 60" stroke="#00005a" stroke-width="2"/>
                <path d="M1412.500 751l12-7v261l-12 6z" fill="#b4b4b4"/>
                <path d="M1162 606l13-7 5 3.500 244.500 141.500-12 7z" fill="#00f" stroke-width="2"/>
                <path d="M1168 610l12-7" stroke-width="3"/>
                <path d="M775.500 384v260l277 160 8 2M1168 871l244.500 140"/>
                <path d="M1053 543v261M1168 610v258" stroke-width="2"/>
                <path d="M1060 804l103 59" stroke-width="4"/>
                <path d="M1060 804l103 59" stroke="#b98a5e" stroke-width="2"/>
                <path d="M1059.500 546v260M1162.500 606v259l5 3"/>
                <!-- section box -->
                <path d="M961.500 238L625.500 431.500v260.500L1296.500 1078.500 1632.500 885V625zM961.500 238v259L625.500 692M961.500 497L1632.500 885M625.500 431.500L1296.500 818.500v260M1296.500 818.500L1632.500 625"/>
              </g>
              <!-- door handle -->
              <g stroke="#000" fill="#fff"><path d="M1064 667l4-6 5 4v5h-6zM1067 665l4 4"/><path d="M1062 669l5 6 10 3 2 2-3 1-10-3-4-5z"/><ellipse cx="1069" cy="682" rx="4" ry="4"/></g>
              <!-- view cube -->
              <g class="cube">
                <path fill-rule="evenodd" d="M1751 258a60 39.500 0 1 0 120 0a60 39.500 0 1 0-120 0zM1763 257a48 31 0 1 1 96 0a48 31 0 1 1-96 0z" fill="#e4e6ec"/>
                <ellipse cx="1811" cy="257" rx="48" ry="31" fill="#fff" stroke="#b4b6bb" stroke-width="1.500"/>
                <ellipse cx="1811" cy="261" rx="40" ry="20" fill="url(#cubeShade)"/>
                <text transform="translate(1764 231) rotate(15) skewX(30)">W</text>
                <text transform="translate(1842 233) rotate(20) skewX(-20)">N</text>
                <text transform="translate(1755 285) rotate(20)">S</text>
                <text transform="translate(1851 288) rotate(-35) skewX(-20)">E</text>
                <path d="M1776.500 211.500L1811.500 231.500V272L1778.500 251zM1811.500 231.500L1845.500 211.500 1843.500 251 1811.500 272z" fill="url(#cubeFace)" stroke="#8a8c90"/>
                <path d="M1811.500 195.500L1845.500 211.500 1811.500 231.500 1776.500 211.500z" fill="#eff0f4" stroke="#8a8c90"/>
                <text class="small" transform="translate(1781 239) skewY(29)">FRONT</text>
                <text class="small" transform="translate(1817 252) skewY(-29)">RIGHT</text>
                <text class="small" transform="translate(1802 211) rotate(28) skewX(-25)">TOP</text>
              </g>
            </svg>
          </div>
          <div class="vscroll">
            <button aria-label="Scroll up"><svg><use href="#chev"/></svg></button>
            <span class="thumb"></span>
            <button aria-label="Scroll down"><svg class="down"><use href="#chev"/></svg></button>
          </div>
        </div>
        <div class="viewbar">
          <button class="scale">1 : 50</button>
          <button aria-label="Detail level"><svg><use href="#detail"/></svg></button>
          <button aria-label="Graphics style"><svg><use href="#shade"/></svg></button>
          <button aria-label="Shadows"><svg><use href="#shadow"/></svg></button>
          <button aria-label="Rendering"><svg><use href="#teapot"/></svg></button>
          <button aria-label="Crop"><svg><use href="#crop"/></svg></button>
          <button aria-label="Crop region"><svg><use href="#cropvis"/></svg></button>
          <button aria-label="Hide"><svg><use href="#glasses"/></svg></button>
          <button aria-label="Reveal"><svg><use href="#bulb"/></svg></button>
          <div class="hscroll">
            <button aria-label="Scroll left"><svg class="left"><use href="#chev"/></svg></button>
            <span class="thumb"></span>
            <button aria-label="Scroll right"><svg class="right"><use href="#chev"/></svg></button>
          </div>
          <svg class="grip" viewBox="0 0 18 16"><path d="M12 4h2v2h-2zM12 8h2v2h-2zM12 12h2v2h-2zM8 8h2v2H8zM8 12h2v2H8zM4 12h2v2H4z" fill="#b8b4a0"/></svg>
        </div>
      </section>
    </main>

    <footer class="status">
      <span class="msg">Ready</span>
      <span class="cell"></span>
      <span class="cell num">NUM</span>
      <span class="cell gap"></span>
      <span class="cell filter"><svg><use href="#funnel"/></svg>:0</span>
      <span class="cell end"><svg><use href="#dish"/></svg></span>
    </footer>
  </div>
  <div class="behind"><span></span><b></b></div>
  </div>
  <div class="taskbar"></div>
</body>
</html>
```
FILE: styles.css
```css
* { box-sizing: border-box; }
body {
  margin: 0;
  height: 100vh;
  display: flex;
  flex-direction: column;
  overflow: hidden;
  font-family: "DejaVu Sans Condensed", "DejaVu Sans", sans-serif;
  font-size: 10px;
  line-height: 16px;
  color: #000;
  background: #ece9d8;
}
button, input, select { font: inherit; color: inherit; margin: 0; padding: 0; border: 0; background: none; border-radius: 0; }
svg { width: 16px; height: 16px; flex: none; display: block; }
ul { list-style: none; margin: 0; padding: 0; }
.sprite { position: absolute; width: 0; height: 0; }
.screen { flex: 1; display: flex; min-height: 0; }
.app { flex: 1; min-width: 0; display: flex; flex-direction: column; }
.behind { width: 4px; background: #ece9d8; display: flex; flex-direction: column; border-left: 1px solid #fff; }
.behind span { height: 26px; background: #7a92e6; }
.behind b { margin-top: 77px; flex: 1; border-left: 1px solid #716f64; border-top: 1px solid #716f64; }
.taskbar { height: 4px; background: #3a80e4; }

/* title */
.titlebar {
  height: 26px;
  display: flex;
  align-items: center;
  padding: 0 2px;
  background: linear-gradient(#3593ff 0, #2a8bff 2px, #0058ee 5px, #0054e3 14px, #0066ff 20px, #0061fc 24px, #0040c8 26px);
}
.logo { margin-right: 4px; }
.titlebar h1 { margin: 0; font: bold 13px/20px "Open Sans", sans-serif; color: #fff; text-shadow: 1px 1px #0a2a80; flex: 1; }
.winbtns { display: flex; gap: 2px; }
.winbtns button { width: 21px; height: 21px; border: 1px solid #fff; border-radius: 3px; background: linear-gradient(135deg, #7a9cf0, #2a5fdc 45%, #1c4ecc); color: #fff; padding: 1px; }
.winbtns .red { background: linear-gradient(135deg, #f0a088, #e0502a 45%, #c8401c); }

/* menu */
.menubar { height: 21px; display: flex; align-items: center; padding: 0 2px 2px 4px; border-bottom: 1px solid #aca899; }
.doc { margin-right: 6px; }
.menubar > button { margin-right: 13px; }
.docbtns { margin-left: auto; display: flex; gap: 3px; color: #555; }
.docbtns button { width: 16px; height: 16px; background: #f4f2e8; padding: 2px; }
.docbtns svg { width: 12px; height: 12px; }

/* toolbars */
.toolrow { height: 31px; display: flex; border-top: 1px solid #fff; border-bottom: 1px solid #aca899; }
.toolbar { display: flex; align-items: center; border-right: 1px solid #aca899; border-left: 1px solid #fff; padding: 0 0 2px 13px; background: linear-gradient(#aca899, #aca899) 3px 3px / 1px 24px no-repeat; }
.std { width: 395px; }
.view { width: 217px; }
.edit { width: 496px; }
.tools { width: 888px; }
.worksets { width: 256px; }
.last { flex: 1; border-right: 0; }
.tool { height: 23px; width: 23px; display: flex; align-items: center; justify-content: center; }
.tool:disabled { color: #aca899; }
.drop { width: 14px; }
.pressed { background: #fff; border: 1px solid #98b5e2; border-radius: 3px; }
.label { width: auto; padding: 0 8px 0 4px; gap: 4px; }
.label:disabled { text-shadow: 1px 0 #aca899, 2px 1px #fff; }
.sep { width: 8px; height: 26px; background: linear-gradient(#aca899, #aca899) 4px 0 / 1px 26px no-repeat; }
.search { display: flex; align-items: center; width: 160px; height: 23px; margin-left: 1px; background: #fff; border: 1px solid #7f8fa9; padding: 0 3px; }
.search input { flex: 1; min-width: 0; outline: 0; font-size: 11px; }
.search input::placeholder { color: #8c8c8c; opacity: 1; }
select { appearance: none; height: 22px; border: 1px solid #c9c7ba; background: #ece9d8 url("data:image/svg+xml,%3Csvg xmlns='http://www.w3.org/2000/svg' width='16' height='18'%3E%3Cpath d='M0 0h16v18H0z' fill='%23f0efe6'/%3E%3Cpath d='M4 7l4 4 4-4' fill='none' stroke='%23c4c2b4' stroke-width='2'/%3E%3C/svg%3E") right 1px center no-repeat; }
.worksets select { width: 150px; background-color: #fff; }
.options { height: 31px; display: flex; align-items: center; padding: 0 4px 4px; gap: 7px; border-top: 1px solid #fff; }
.options select { width: 197px; }
.options button { width: 33px; height: 23px; border: 1px solid #fff; border-right-color: #000; border-bottom-color: #000; display: flex; align-items: center; justify-content: center; }

/* work area */
.work { flex: 1; min-height: 0; display: flex; }
.design { width: 98px; display: flex; flex-direction: column; padding-top: 2px; border-left: 2px solid #aca899; }
.tab { height: 18px; line-height: 15px; flex: none; border: 1px solid #000; border-top-color: #fff; border-left: 0; padding-right: 4px; text-align: center; }
.cmds { flex: 1; padding-top: 1px; border-right: 1px solid #fff; }
.cmds button { display: flex; align-items: center; gap: 3px; height: 22px; width: 100%; padding-left: 4px; }
.cmds button:disabled { color: #aca899; text-shadow: 1px 1px #fff; }
.browser { width: 395px; margin: 2px 6px 0 7px; display: flex; flex-direction: column; border: solid #0d45c8; border-width: 0 3px 1px 4px; background: #fff; }
.browser header { display: flex; align-items: center; height: 20px; flex: none; background: linear-gradient(#0058ee, #0a6cff); padding: 0 1px 0 0; }
.browser h2 { margin: 0; flex: 1; font: bold 11px/18px "DejaVu Sans Condensed", "DejaVu Sans", sans-serif; color: #fff; }
.browser header button { width: 14px; height: 14px; border: 1px solid #fff; border-radius: 2px; background: #e0562e; color: #fff; padding: 1px; }
.browser header svg { width: 10px; height: 10px; }
.nodes { flex: 1; border-left: 1px solid #aca899; padding: 1px 0 0 5px; font: 11px/16px "Liberation Sans", Arial, sans-serif; }
.nodes > li { padding-left: 20px; background: repeating-linear-gradient(#b0b0b0 0 1px, #fff 1px 2px) 4px 0 / 1px 100% no-repeat; }
.nodes > li:first-child { background-position-y: 8px; }
.nodes > li:last-child { background-size: 1px 8px; }
.row, .nodes ul li { display: flex; align-items: center; height: 16px; }
.row { margin-left: -20px; background: repeating-linear-gradient(90deg, #b0b0b0 0 1px, transparent 1px 2px) 4px 8px / 12px 1px no-repeat; }
.row svg { margin: 0 4px 0 7px; }
.row span { padding: 0 2px; }
.nodes ul li { background: repeating-linear-gradient(90deg, #b0b0b0 0 1px, #fff 1px 2px) 4px 8px / 16px 1px no-repeat; }
.nodes ul span { margin-left: 9px; padding: 0 3px; }
.box { width: 9px; height: 9px; border: 1px solid #8a97a8; background: linear-gradient(#000, #000) 1px 3px / 5px 1px no-repeat, linear-gradient(#000, #000) 3px 1px / 1px 5px no-repeat, #f4f3ee; }
.box.open { background: linear-gradient(#000, #000) 1px 3px / 5px 1px no-repeat, #f4f3ee; }
.leaf { width: 9px; height: 1px; }
.nodes .sel { background: #316ac5; color: #fff; }

/* 3D view */
.viewport { flex: 1; min-width: 0; display: flex; flex-direction: column; border: 2px solid #716f64; border-right: 0; border-bottom: 1px solid #716f64; background: #fff; margin-right: 2px; }
.scene { flex: 1; min-height: 0; display: flex; }
.canvas { flex: 1; min-width: 0; overflow: hidden; }
.model { width: 1394px; height: 985px; }
.cube text { font: bold 15px "Liberation Sans", sans-serif; fill: #a9abb1; }
.cube .small { font-size: 8px; fill: #6f7278; }
.vscroll, .hscroll { display: flex; justify-content: space-between; background: #f6f5ef; }
.vscroll { flex-direction: column; width: 16px; }
.hscroll { flex: 1; height: 16px; }
.vscroll button, .hscroll button, .thumb { width: 15px; height: 15px; border-radius: 2px; background: #c1d3fb; border: 1px solid #a9c0ee; }
.vscroll svg, .hscroll svg { width: 13px; height: 13px; }
.thumb { background: repeating-linear-gradient(90deg, #a9c0ee 0 1px, #c8d8fc 1px 3px); }
.down { transform: rotate(180deg); }
.left { transform: rotate(-90deg); }
.right { transform: rotate(90deg); }
.viewbar { height: 18px; flex: none; display: flex; align-items: center; background: #ece9d8; padding-left: 27px; }
.viewbar > button { width: 21px; display: flex; justify-content: center; }
.viewbar .scale { width: 49px; justify-content: flex-start; font-size: 11px; }
.hscroll { margin-left: 2px; }
.grip { width: 18px; height: 16px; }

/* status */
.status { height: 20px; display: flex; align-items: center; padding: 0 2px 0 1px; border-top: 1px solid #fff; font-size: 11px; }
.msg { flex: 1; }
.cell { width: 28px; height: 16px; border-left: 1px solid #c5c2b0; display: flex; align-items: center; }
.num { width: 31px; padding-left: 4px; }
.gap { width: 33px; }
.filter { width: 95px; padding-left: 4px; }
.end { width: 26px; padding-left: 6px; }
```
